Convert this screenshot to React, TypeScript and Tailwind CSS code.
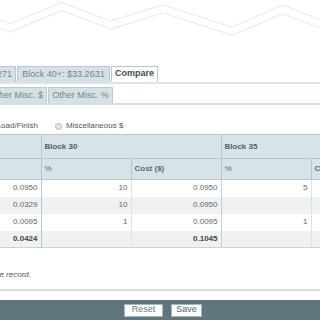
import React from "react";

const rows = [
  { base: "0.0950", p30: "10", c30: "0.0950", p35: "5", alt: false },
  { base: "0.0329", p30: "10", c30: "0.0950", p35: "", alt: true },
  { base: "0.0095", p30: "1", c30: "0.0095", p35: "1", alt: false },
  { base: "0.0424", p30: "", c30: "0.1045", p35: "", alt: true, total: true },
];

const Zigzag = () => (
  <svg width="320" height="40" viewBox="0 0 320 40" className="block shrink-0">
    <polyline
      points="0,20 10,23.5 62,2.5 110,21 163,5 232,27 283,5 320,20"
      fill="none"
      stroke="#ececec"
      strokeWidth="1.3"
    />
    <polyline
      points="0,28 10,32 62,10.5 111,29 163,13 232,35 283,14 320,28"
      fill="none"
      stroke="#ececec"
      strokeWidth="1.3"
    />
  </svg>
);

// clipped tab: the left part of the label runs off the screen
const Tab = ({ label, w, active, clip }: { label: string; w: string; active?: boolean; clip?: boolean }) => (
  <div
    className={`flex h-full items-center overflow-hidden whitespace-nowrap border border-[#b9c9ce] text-[9px] ${w} ${
      clip ? "justify-end pr-[3px]" : "justify-center"
    } ${active ? "border-b-white bg-white font-bold text-[#3e4f55]" : "border-b-0 bg-[#d6e1e5] text-[#71868d]"}`}
  >
    {label}
  </div>
);

export default function App() {
  return (
    <div className="flex h-[320px] w-[320px] flex-col overflow-hidden bg-white font-['Liberation_Sans',Arial,sans-serif]">
      <Zigzag />

      {/* tabs, row 1 */}
      <div className="mt-[26px] flex h-[16px] items-end gap-px">
        <Tab label="Block 35: $32.9271" w="w-[17px] -ml-px" clip />
        <Tab label="Block 40+: $33.2631" w="w-[93px]" />
        <Tab label="Compare" w="w-[47px] h-[17px]" active />
      </div>
      <div className="h-[2px] bg-[#dde3e6]" />

      {/* tabs, row 2 */}
      <div className="mt-[3px] flex h-[16px] items-end gap-px">
        <Tab label="Other Misc. $" w="w-[48px] -ml-px" clip />
        <Tab label="Other Misc. %" w="w-[65px]" />
      </div>
      <div className="h-[2px] bg-[#d5dfe1]" />

      {/* radio options */}
      <div className="mt-[16px] flex h-[10px] items-center text-[8px] text-[#555]">
        <div className="flex w-[38px] justify-end overflow-hidden whitespace-nowrap">Start/Load/Finish</div>
        <span className="ml-[17px] mr-[4px] h-[7px] w-[7px] rounded-full border border-[#bbb] bg-[#e6e6e6]" />
        <span>Miscellaneous $</span>
      </div>

      {/* compare table */}
      <div className="mt-[3px] overflow-hidden">
        <table className="w-[361px] table-fixed border-collapse text-[8px]">
          <colgroup>
            <col className="w-[41px]" />
            <col className="w-[90px]" />
            <col className="w-[90px]" />
            <col className="w-[90px]" />
            <col className="w-[50px]" />
          </colgroup>
          <thead>
            <tr className="h-[24px] bg-[#d8e3e7] text-left font-bold text-[#4c6169]">
              <th className="border border-l-0 border-[#b7c7cd]" />
              <th colSpan={2} className="border border-[#b7c7cd] pl-[3px]">Block 30</th>
              <th colSpan={2} className="border border-[#b7c7cd] pl-[3px]">Block 35</th>
            </tr>
            <tr className="h-[21px] bg-[#d8e3e7] text-left text-[#5a6d73]">
              <th className="border border-l-0 border-[#b7c7cd]" />
              <th className="border border-[#b7c7cd] pl-[3px] font-normal">%</th>
              <th className="border border-[#b7c7cd] pl-[3px] font-bold">Cost ($)</th>
              <th className="border border-[#b7c7cd] pl-[3px] font-normal">%</th>
              <th className="border border-[#b7c7cd] pl-[3px] font-bold">Cost ($)</th>
            </tr>
          </thead>
          <tbody className="text-right text-[#666]">
            {rows.map((r, i) => (
              <tr
                key={i}
                className={`h-[17px] ${r.alt ? "bg-[#eef2f4]" : "bg-white"} ${r.total ? "font-bold text-[#444]" : ""}`}
              >
                <td className="border-r border-[#b7c7cd] pr-[3px]">{r.base}</td>
                <td className="border-r border-[#dbe3e6] pr-[3px]">{r.p30}</td>
                <td className="border-r border-[#c3d0d4] pr-[3px]">{r.c30}</td>
                <td className="border-r border-[#dbe3e6] pr-[3px]">{r.p35}</td>
                <td />
              </tr>
            ))}
            <tr className="h-0">
              <td colSpan={5} className="border-t border-[#c9d4d8] p-0" />
            </tr>
          </tbody>
        </table>
      </div>

      <div className="mt-[22px] flex h-[10px] items-center">
        <div className="flex w-[31px] justify-end overflow-hidden whitespace-nowrap text-[8px] italic text-[#555]">
          Click Save to update the record.
        </div>
      </div>

      <div className="mt-[9px] h-[2px] bg-[#d6dee1]" />

      {/* footer actions */}
      <div className="mt-auto flex h-[20px] items-center justify-center gap-[8px] bg-[#5f777c] pl-[6px]">
        <button className="flex h-[13px] w-[39px] items-center justify-center border border-[#a9b5b8] bg-white text-[9px] text-[#6a7b80]">
          Reset
        </button>
        <button className="flex h-[13px] w-[31px] items-center justify-center border border-[#a9b5b8] bg-white text-[9px] text-[#53656a]">
          Save
        </button>
      </div>
    </div>
  );
}
